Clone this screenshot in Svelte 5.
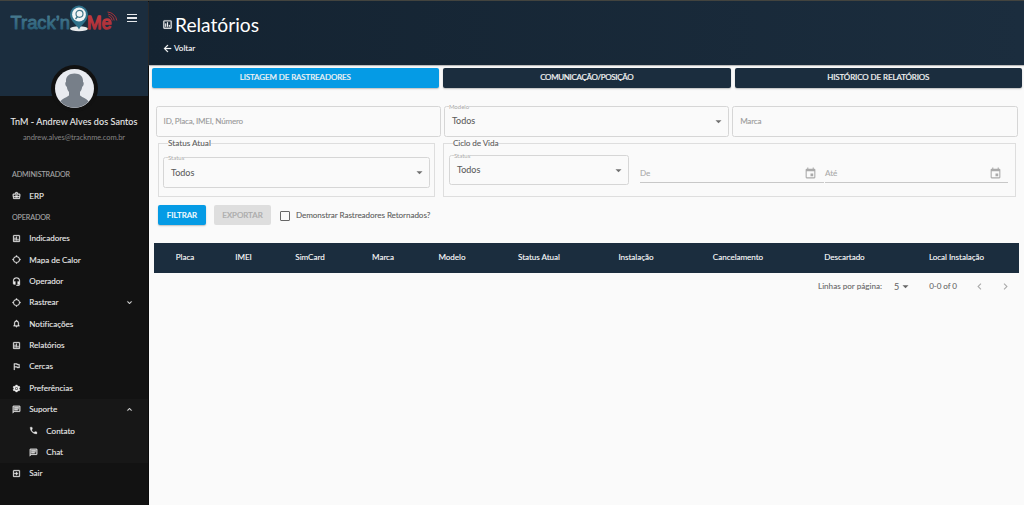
<script>
  const icons = {
    work: 'M20 7h-4V5l-2-2h-4L8 5v2H4a2 2 0 0 0-2 2v5c0 .75.4 1.380 1 1.730V19a2 2 0 0 0 2 2h14a2 2 0 0 0 2-2v-3.280c.59-.35 1-.99 1-1.720V9a2 2 0 0 0-2-2zM10 5h4v2h-4zM4 9h16v5h-5v-2H9v2H4zM5 16h4v1h6v-1h4v3H5z',
    chart: 'M19 3H5a2 2 0 0 0-2 2v14a2 2 0 0 0 2 2h14a2 2 0 0 0 2-2V5a2 2 0 0 0-2-2zm0 16H5V5h14v14zM7 10h2v7H7zm4-3h2v10h-2zm4 6h2v4h-2z',
    target: 'M20.940 11A8.990 8.990 0 0 0 13 3.060V1h-2v2.060A8.990 8.990 0 0 0 3.060 11H1v2h2.060A8.990 8.990 0 0 0 11 20.940V23h2v-2.060A8.990 8.990 0 0 0 20.940 13H23v-2h-2.060zM12 19a7 7 0 1 1 0-14 7 7 0 0 1 0 14z',
    headset: 'M12 1a9 9 0 0 0-9 9v7a3 3 0 0 0 3 3h3v-8H5v-2a7 7 0 0 1 14 0v2h-4v8h4v1h-7v2h6a3 3 0 0 0 3-3V10a9 9 0 0 0-9-9z',
    bell: 'M12 22a2 2 0 0 0 2-2h-4a2 2 0 0 0 2 2zm6-6v-5c0-3.070-1.630-5.640-4.500-6.320V4a1.500 1.500 0 0 0-3 0v.68C7.640 5.360 6 7.920 6 11v5l-2 2v1h16v-1l-2-2zm-2 1H8v-6c0-2.480 1.510-4.500 4-4.500s4 2.020 4 4.500v6z',
    flag: 'M12.360 6l.4 2H18v6h-3.360l-.4-2H7V6h5.360M14 4H5v17h2v-7h5.600l.4 2h7V6h-5.600L14 4z',
    gear: 'M19.140 12.940a7 7 0 0 0 0-1.880l2.030-1.580a.5.5 0 0 0 .12-.61l-1.920-3.320a.5.5 0 0 0-.59-.22l-2.390.96a7 7 0 0 0-1.620-.94l-.36-2.540a.5.5 0 0 0-.48-.41h-3.840a.5.5 0 0 0-.47.41l-.36 2.540a7 7 0 0 0-1.620.94l-2.390-.96a.5.5 0 0 0-.59.22L2.740 8.870a.5.5 0 0 0 .12.610l2.030 1.580a7 7 0 0 0 0 1.880l-2.030 1.580a.5.5 0 0 0-.12.610l1.920 3.320c.12.22.37.290.59.220l2.390-.96a7 7 0 0 0 1.620.94l.36 2.540c.05.240.24.410.48.410h3.840c.24 0 .44-.17.47-.41l.36-2.540a7 7 0 0 0 1.620-.94l2.390.96c.22.080.47 0 .59-.22l1.920-3.320a.5.5 0 0 0-.12-.61l-2.010-1.580zM12 16a4 4 0 1 1 0-8 4 4 0 0 1 0 8zm0-2a2 2 0 1 0 0-4 2 2 0 0 0 0 4z',
    chat: 'M20 2H4a2 2 0 0 0-2 2v18l4-4h14a2 2 0 0 0 2-2V4a2 2 0 0 0-2-2zm0 14H6l-2 2V4h16v12zM6 6h12v2H6zm0 3h12v2H6zm0 3h9v2H6z',
    phone: 'M6.620 10.790a15.150 15.150 0 0 0 6.590 6.590l2.200-2.200a1 1 0 0 1 1.020-.24c1.120.37 2.330.57 3.570.57a1 1 0 0 1 1 1V20a1 1 0 0 1-1 1A17 17 0 0 1 3 4a1 1 0 0 1 1-1h3.500a1 1 0 0 1 1 1c0 1.250.2 2.450.57 3.570a1 1 0 0 1-.25 1.020l-2.200 2.200z',
    exit: 'M19 3H5a2 2 0 0 0-2 2v14a2 2 0 0 0 2 2h14a2 2 0 0 0 2-2V5a2 2 0 0 0-2-2zm0 16H5V5h14v14zM11 7l5 5-5 5v-4H6v-2h5V7z',
    down: 'M7.410 8.590L12 13.170l4.590-4.580L18 10l-6 6-6-6z',
    up: 'M12 8l-6 6 1.410 1.410L12 10.830l4.590 4.580L18 14z',
    back: 'M20 11H7.830l5.590-5.590L12 4l-8 8 8 8 1.410-1.410L7.830 13H20v-2z',
    caret: 'M6.500 9.500l5.500 5.500 5.500-5.500z',
    event: 'M17 12h-5v5h5v-5zM16 1v2H8V1H6v2H5a2 2 0 0 0-2 2v14a2 2 0 0 0 2 2h14a2 2 0 0 0 2-2V5a2 2 0 0 0-2-2h-1V1h-2zm3 18H5V8h14v11z',
    left: 'M15.410 7.410L14 6l-6 6 6 6 1.410-1.410L10.830 12z',
    right: 'M10 6L8.590 7.410 13.170 12l-4.580 4.590L10 18l6-6z',
  };
  const menu = [
    { text: 'ADMINISTRADOR', head: true },
    { text: 'ERP', icon: 'work' },
    { text: 'OPERADOR', head: true },
    { text: 'Indicadores', icon: 'chart' },
    { text: 'Mapa de Calor', icon: 'target' },
    { text: 'Operador', icon: 'headset' },
    { text: 'Rastrear', icon: 'target', arrow: 'down' },
    { text: 'Notificações', icon: 'bell' },
    { text: 'Relatórios', icon: 'chart' },
    { text: 'Cercas', icon: 'flag' },
    { text: 'Preferências', icon: 'gear' },
    { text: 'Suporte', icon: 'chat', arrow: 'up', group: true },
    { text: 'Contato', icon: 'phone', sub: true, group: true },
    { text: 'Chat', icon: 'chat', sub: true, group: true },
    { text: 'Sair', icon: 'exit' },
  ];
  const tabs = ['LISTAGEM DE RASTREADORES', 'COMUNICAÇÃO/POSIÇÃO', 'HISTÓRICO DE RELATÓRIOS'];
  const columns = [
    ['Placa', 62], ['IMEI', 55], ['SimCard', 78], ['Marca', 68], ['Modelo', 70],
    ['Status Atual', 104], ['Instalação', 90], ['Cancelamento', 114], ['Descartado', 99], ['Local Instalação', 125],
  ];
</script>

{#snippet icon(name, size)}
  <svg class="icon" width={size} height={size} viewBox="0 0 24 24"><path d={icons[name]} /></svg>
{/snippet}

{#snippet select(label)}
  <div class="field">
    <span class="float">{label}</span>
    <span class="value">Todos</span>
    {@render icon('caret', 13)}
  </div>
{/snippet}

<div class="page">
  <aside>
    <div class="brand">
      <svg class="logo" width="109" height="32" viewBox="0 0 109 32">
        <defs>
          <linearGradient id="blue" x1="0" y1="0" x2="0" y2="1"><stop offset="0" stop-color="#4f8094" /><stop offset="1" stop-color="#235a74" /></linearGradient>
          <linearGradient id="red" x1="0" y1="0" x2="0" y2="1"><stop offset="0" stop-color="#c93b40" /><stop offset="1" stop-color="#a02d36" /></linearGradient>
        </defs>
        <text class="word" x="0.500" y="23.700" textLength="59.500" lengthAdjust="spacingAndGlyphs" fill="url(#blue)" stroke="url(#blue)">Track’n</text>
        <ellipse cx="69" cy="23.800" rx="9" ry="2.500" fill="#e8eaec" />
        <path d="M69 24.500c-2-5-9-8-9-15a9 9 0 0 1 18 0c0 7-7 10-9 15z" fill="#31738c" />
        <circle cx="69" cy="9.500" r="6.900" fill="#f3f5f6" />
        <circle cx="69.500" cy="8.800" r="3.500" fill="none" stroke="#41778a" stroke-width="1.200" />
        <path d="M67.500 11.500l-2 2.500" stroke="#41778a" stroke-width="1.400" />
        <text class="word me" x="77" y="23.700" textLength="24.500" lengthAdjust="spacingAndGlyphs" fill="url(#red)" stroke="url(#red)">Me</text>
        <path d="M98.500 11a5.500 5.500 0 0 1 3.700 4.500M98 9a8 8 0 0 1 6.200 6.500M97.500 7a10 10 0 0 1 9.300 8.500" fill="none" stroke="#a93139" stroke-width="1" />
      </svg>
      <div class="burger"><i></i><i></i><i></i></div>
    </div>
    <div class="avatar">
      <svg width="39" height="39" viewBox="0 0 39 39">
        <circle cx="19.500" cy="19.500" r="19.500" fill="#e9ebf0" />
        <path d="M19.500 4.500c-5.500 0-8.800 3-8.500 8.200-1.300.6-.7 4.300.8 5 .4 2.500 1.200 4.200 2.200 5.300v3.200c-1.500 2-6 2.800-8.700 6.300a19.500 19.500 0 0 0 28.400 0c-2.700-3.500-7.200-4.300-8.700-6.300V23c1-1.100 1.800-2.800 2.200-5.300 1.500-.7 2.100-4.400.8-5 .3-5.200-3-8.200-8.500-8.200z" fill="#777f89" />
      </svg>
    </div>
    <div class="name"><span>TnM - Andrew Alves dos Santos</span></div>
    <div class="mail"><span>andrew.alves@tracknme.com.br</span></div>
    <nav>
      {#each menu as m}
        <div class="item" class:head={m.head} class:sub={m.sub} class:group={m.group}>
          {#if m.icon}{@render icon(m.icon, 9)}{/if}
          <span>{m.text}</span>
          {#if m.arrow}<b>{@render icon(m.arrow, 9)}</b>{/if}
        </div>
      {/each}
    </nav>
  </aside>

  <main>
    <header>
      <h1>{@render icon('chart', 11)}<span>Relatórios</span></h1>
      <div class="back">{@render icon('back', 11)}<span>Voltar</span></div>
    </header>

    <div class="tabs">
      {#each tabs as t, i}<button class="tab" class:on={i === 0} class:mid={i === 1}>{t}</button>{/each}
    </div>

    <div class="filters">
      <div class="field"><span class="hint">ID, Placa, IMEI, Número</span></div>
      {@render select('Modelo')}
      <div class="field"><span class="hint">Marca</span></div>
    </div>

    <div class="sets">
      <section class="now">
        <span class="legend">Status Atual</span>
        {@render select('Status')}
      </section>
      <section class="cycle">
        <span class="legend wide">Ciclo de Vida</span>
        {@render select('Status')}
        <div class="date de"><span>De</span>{@render icon('event', 13)}</div>
        <div class="date"><span>Até</span>{@render icon('event', 13)}</div>
      </section>
    </div>

    <div class="actions">
      <button class="go">FILTRAR</button>
      <button class="off">EXPORTAR</button>
      <i class="check"></i>
      <span class="ask">Demonstrar Rastreadores Retornados?</span>
    </div>

    <div class="thead">
      {#each columns as [label, width]}<span style="width: {width}px">{label}</span>{/each}
    </div>

    <div class="pager">
      <span class="rows">Linhas por página:</span>
      <span class="num">5</span>
      {@render icon('caret', 13)}
      <span class="range">0-0 of 0</span>
      <span class="nav">{@render icon('left', 13)}{@render icon('right', 13)}</span>
    </div>
  </main>
</div>

<style>
  :global(body) { background: #fafafa; }
  .page, .page * { box-sizing: border-box; }
  .page { display: flex; width: 1024px; height: 505px; overflow: hidden; border-top: 1px solid #43443f; background: #fafafa; font: 8.100px/1.300 Lato, "Open Sans", sans-serif; color: #5c5c5c; -webkit-text-stroke: .08px currentColor; }
  .icon { display: block; flex: none; fill: currentColor; }
  button { border: 0; padding: 0 0 1px; font-family: inherit; -webkit-text-stroke: .2px currentColor; }

  aside { width: 149px; flex: none; background: #121212; color: #ececec; border-right: 1px solid #0c0c0c; }
  .brand { height: 95px; background: #1b2d3e; display: flex; align-items: flex-start; padding: 4px 0 0 10px; }
  .word { font: 18.500px "Liberation Sans", sans-serif; stroke-width: .9px; stroke-linejoin: round; -webkit-text-stroke: initial; }
  .word.me { stroke-width: 1.300px; }
  .burger { display: grid; gap: 2px; margin: 8.500px 0 0 8px; }
  .burger i { width: 10px; height: 1.500px; background: #e6e8eb; }
  .avatar { width: 47px; height: 47px; margin: -31px 0 0 51px; border-radius: 50%; background: #111; padding: 4px; position: relative; }
  .avatar svg { display: block; }
  .name { text-align: center; margin-top: 5px; height: 9px; font-size: 9px; line-height: 9px; letter-spacing: .08px; white-space: nowrap; }
  .mail { text-align: center; margin-top: 8px; font-size: 7.500px; line-height: 8px; letter-spacing: -.07px; color: #858585; -webkit-text-stroke: 0; }
  nav { margin-top: 21.800px; }
  .item { height: 21.370px; display: flex; align-items: center; padding: 0 14px 0 12px; gap: 8.300px; letter-spacing: -.03px; }
  .item .icon { stroke: currentColor; stroke-width: .8px; }
  .item.head { color: #a8a8a8; font-size: 7.200px; letter-spacing: -.14px; }
  .item.sub { padding-left: 29px; }
  .item.group { background: #171717; }
  .item b { margin-left: auto; }

  main { flex: 1; min-width: 0; display: flex; flex-direction: column; }
  header { height: 64px; flex: none; background: linear-gradient(90deg, #142331, #1b2d3e); color: #fff; padding: 13px 0 0 13px; box-shadow: 0 1px 1px #bbb; }
  h1 { margin: 0; display: flex; align-items: center; gap: 2px; height: 21px; font-weight: 400; font-size: 19.200px; line-height: 1; -webkit-text-stroke: 0; }
  h1 .icon, .back .icon { stroke: currentColor; stroke-width: .5px; }
  .back { display: flex; align-items: center; gap: 1px; margin-top: 7.500px; }

  .tabs { display: grid; grid-template-columns: repeat(3, 1fr); gap: 4px; padding: 2.500px 2px 0 2.500px; }
  .tab { height: 20px; border-radius: 2px; background: #1b2d3e; color: #f4f4f4; font-size: 8px; letter-spacing: -.11px; box-shadow: 0 1px 1.500px #8888; }
  .tab.on { background: #059be5; }
  .tab.mid { letter-spacing: -.32px; }

  .filters { display: grid; grid-template-columns: 285px 285px 286px; gap: 3.300px; padding: 18px 0 0 6.600px; }
  .field { position: relative; height: 31px; border: 1px solid #d6d6d6; border-radius: 2.500px; display: flex; align-items: center; padding: 0 3px 0 7px; }
  .field .icon { margin-left: auto; color: #707070; }
  .hint { color: #999; letter-spacing: -.21px; }
  .value { font-size: 9px; }
  .float { position: absolute; left: 4px; top: -4px; font-size: 6px; line-height: 7px; background: #fafafa; color: #aaa; -webkit-text-stroke: 0; }

  .sets { display: flex; gap: 8px; padding: 6.500px 8px 0 9px; }
  section { position: relative; height: 54px; border: 1px solid #dedede; display: flex; }
  .legend { position: absolute; left: 9px; top: -5px; line-height: 9px; font-size: 8.200px; background: #fafafa; }
  .legend.wide { letter-spacing: -.12px; }
  .now { width: 277px; padding: 13px 4px 0; }
  .now .field { flex: 1; }
  .cycle { flex: 1; padding: 11px 7px 0 5px; }
  .cycle .field { width: 180px; height: 30px; flex: none; }
  .date { width: 183px; flex: none; height: 28px; border-bottom: 1px solid #c8c8c8; display: flex; align-items: center; padding: 10px 6px 0 0; color: #aaa; margin-left: 1px; }
  .date .icon { margin-left: auto; }
  .date.de { width: 184px; margin-left: 11px; padding-right: 7px; }

  .actions { display: flex; align-items: center; height: 20px; margin: 8px 0 0 9px; }
  .actions button { height: 20px; border-radius: 2px; font-size: 8px; }
  .actions .go { width: 48px; background: #059be5; color: #fff; box-shadow: 0 1px 1.500px #9999; }
  .actions .off { width: 57px; margin-left: 8px; background: #dedede; color: #aaa; }
  .ask { letter-spacing: -.07px; margin-top: 1px; }
  .check { width: 10px; height: 10px; border: 1.200px solid #666; border-radius: 1px; margin: 2px 6px 0 9px; }

  .thead { display: flex; align-items: center; height: 30px; margin: 17.500px 5px 0 5px; background: #1b2d3e; color: #fff; text-align: center; letter-spacing: -.04px; }
  .pager { display: flex; align-items: center; height: 28px; padding-left: 669px; color: #666; }
  .num { margin-left: 12px; font-size: 9px; }
  .range { margin-left: 17px; letter-spacing: -.1px; }
  .nav { display: flex; gap: 13px; margin-left: 16px; color: #aaa; }
</style>
